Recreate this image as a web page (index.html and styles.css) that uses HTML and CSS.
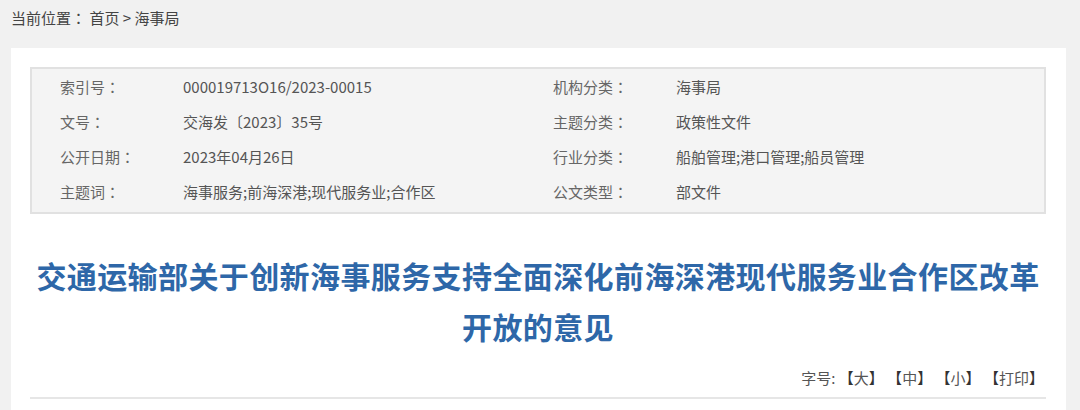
FILE: index.html
```html
<!DOCTYPE html>
<html lang="zh-CN">
<head>
<meta charset="utf-8">
<title>交通运输部关于创新海事服务支持全面深化前海深港现代服务业合作区改革开放的意见</title>
<link rel="stylesheet" href="styles.css">
</head>
<body>
  <div class="crumb">当前位置<span class="pc" lang="zh-TW">：</span> <a href="#">首页</a> &gt; <a href="#">海事局</a></div>
  <div class="card">
    <div class="info">
      <div class="row"><span class="lbl">索引号<span class="pc" lang="zh-TW">：</span></span><span class="val">000019713O16/2023-00015</span></div>
      <div class="row"><span class="lbl">机构分类<span class="pc" lang="zh-TW">：</span></span><span class="val">海事局</span></div>
      <div class="row"><span class="lbl">文号<span class="pc" lang="zh-TW">：</span></span><span class="val">交海发〔2023〕35号</span></div>
      <div class="row"><span class="lbl">主题分类<span class="pc" lang="zh-TW">：</span></span><span class="val">政策性文件</span></div>
      <div class="row"><span class="lbl">公开日期<span class="pc" lang="zh-TW">：</span></span><span class="val">2023年04月26日</span></div>
      <div class="row"><span class="lbl">行业分类<span class="pc" lang="zh-TW">：</span></span><span class="val">船舶管理;港口管理;船员管理</span></div>
      <div class="row"><span class="lbl">主题词<span class="pc" lang="zh-TW">：</span></span><span class="val">海事服务;前海深港;现代服务业;合作区</span></div>
      <div class="row"><span class="lbl">公文类型<span class="pc" lang="zh-TW">：</span></span><span class="val">部文件</span></div>
    </div>
    <h1 class="title">交通运输部关于创新海事服务支持全面深化前海深港现代服务业合作区改革开放的意见</h1>
    <div class="tools">字号: <a href="#"><span class="br" lang="zh-TW">【</span>大<span class="br" lang="zh-TW">】</span></a> <a href="#"><span class="br" lang="zh-TW">【</span>中<span class="br" lang="zh-TW">】</span></a> <a href="#"><span class="br" lang="zh-TW">【</span>小<span class="br" lang="zh-TW">】</span></a> <a href="#"><span class="br" lang="zh-TW">【</span>打印<span class="br" lang="zh-TW">】</span></a></div>
  </div>
</body>
</html>
```
FILE: styles.css
```css
html, body {
  margin: 0;
  padding: 0;
}
body {
  background: #f1f1f1;
  font-family: "Noto Sans CJK SC", "Noto Sans", sans-serif;
  color: #555;
  font-size: 15px;
}
a {
  color: inherit;
  text-decoration: none;
}
.pc {
  font-family: "Noto Sans CJK TC", "Noto Sans CJK SC", sans-serif;
}
.br {
  font-family: "Noto Sans CJK TC", "Noto Sans CJK SC", sans-serif;
  color: #333;
}
.crumb {
  height: 48px;
  line-height: 20px;
  padding: 8px 0 0 11px;
  box-sizing: border-box;
  color: #444;
}
.card {
  background: #fff;
  margin-left: 11px;
  width: 1055px;
  padding: 19px 20px 20px 19px;
  box-sizing: border-box;
  min-height: 380px;
}
.info {
  border: 2px solid #e1e1e1;
  background: #f4f4f4;
  display: grid;
  grid-template-columns: 493px 1fr;
  padding: 0 0 3px 28px;
}
.row {
  display: flex;
  height: 35px;
  align-items: center;
  line-height: 20px;
}
.lbl {
  width: 123px;
  flex: none;
  color: #666;
}
.val {
  color: #555;
}
.title {
  margin: 36px 0 0;
  text-align: center;
  color: #2e67a8;
  font-size: 30px;
  letter-spacing: 0.4px;
  line-height: 51px;
  font-weight: 700;
}
.tools {
  margin-top: 16px;
  text-align: right;
  line-height: 20px;
  padding: 0 2px 9px 0;
  border-bottom: 2px solid #e6e6e6;
  color: #555;
  font-size: 15px;
}
.tools a {
  color: #555;
}
```
